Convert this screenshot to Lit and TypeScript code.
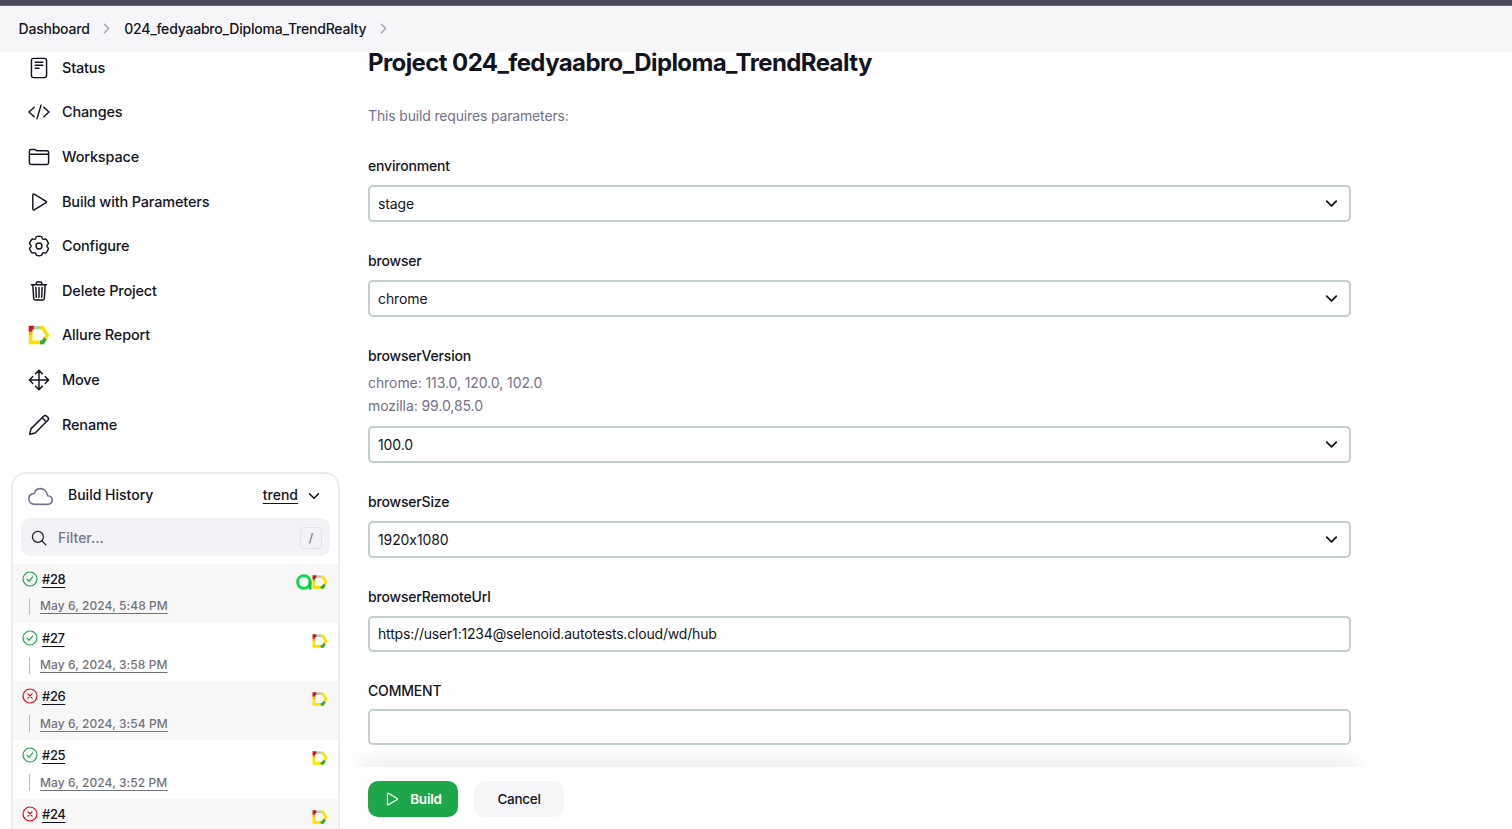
import { LitElement, html, svg, css, nothing, TemplateResult } from "lit";
import { customElement, property } from "lit/decorators.js";

/** Six-lobed gear outline, built from alternating lobe and valley points. */
function gearPath(): string {
  const pts: [number, number][] = [];
  for (let i = 0; i < 6; i++) {
    const base = -90 + i * 60;
    for (const [da, r] of [[-17, 232], [0, 226], [17, 232], [24, 184], [36, 184]] as const) {
      const a = ((base + da) * Math.PI) / 180;
      pts.push([256 + r * Math.cos(a), 256 + r * Math.sin(a)]);
    }
  }
  const mid = (p: [number, number], q: [number, number]) =>
    `${((p[0] + q[0]) / 2).toFixed(1)} ${((p[1] + q[1]) / 2).toFixed(1)}`;
  let d = `M${mid(pts[pts.length - 1], pts[0])}`;
  pts.forEach((p, i) => {
    d += `Q${p[0].toFixed(1)} ${p[1].toFixed(1)} ${mid(p, pts[(i + 1) % pts.length])}`;
  });
  return d + "Z";
}

const allure = svg`
  <path d="M0 8H3.600V14.400H11.500V18H0z" fill="#ffe000"/>
  <path d="M0 5H3.600V9H0z" fill="#fbb614"/>
  <path d="M11 .200h3.600L20 9l-2.600 4.600-3-1.700L16 9l-3.400-5.500H11z" fill="#ffe000"/>
  <path d="M4.500 .200H11.400V3.500H4.500z" fill="#a5d6a4"/>
  <path d="M17.600 13.200L14.800 18H11v-3.600h1.800l1.800-3z" fill="#2fa349"/>
  <path d="M0 0H5V3.600H3.600V5.600H0z" fill="#dc0f1e"/>`;

const shapes: Record<string, TemplateResult> = {
  status: svg`<rect x="80" y="32" width="352" height="448" rx="48"/><path d="M168 120h176M168 192h176M168 264h88"/>`,
  code: svg`<path d="M144 368L24 256l120-112M368 368l120-112-120-112M304 96l-96 320"/>`,
  folder: svg`<path d="M440 432H72a40 40 0 01-40-40V120a40 40 0 0140-40h75.89a40 40 0 0122.19 6.72l27.84 18.56a40 40 0 0022.19 6.72H440a40 40 0 0140 40v240a40 40 0 01-40 40zM32 192h448"/>`,
  play: svg`<path d="M112 91v330c0 17.44 17 28.52 31 20.16l277.900-168.370c12.120-7.250 12.120-26.330 0-33.580L143 70.840c-14-8.360-31 2.720-31 20.160z"/>`,
  gear: svg`<path d=${gearPath()}/><circle cx="256" cy="256" r="68"/>`,
  trash: svg`<path d="M112 112l20 320c.95 18.49 14.4 32 32 32h184c17.67 0 30.87-13.51 32-32l20-320M80 112h352M192 112V72a23.93 23.93 0 0124-24h80a23.93 23.93 0 0124 24v40M256 176v224M184 176l8 224M328 176l-8 224"/>`,
  move: svg`<path d="M176 112l80-80 80 80M256 32v448M176 400l80 80 80-80M400 176l80 80-80 80M112 176l-80 80 80 80M32 256h448"/>`,
  pencil: svg`<path d="M40 472l28-126L364 50a50 50 0 0170 0l28 28a50 50 0 010 70L166 444zM330 88l94 94"/>`,
  cloud: svg`<path d="M400 240c-8.890-89.540-71-144-144-144-69 0-113.440 48.200-128 96-60 6-112 43.590-112 112 0 66 54 112 120 112h260c55 0 100-27.440 100-88 0-59.820-53-85.760-96-88z"/>`,
  search: svg`<circle cx="221" cy="221" r="175"/><path d="M348 348l126 126"/>`,
  down: svg`<path d="M112 184l144 144 144-144"/>`,
  right: svg`<path d="M184 112l144 144-144 144"/>`,
  ok: svg`<circle cx="256" cy="256" r="224"/><path d="M342 190L226 328l-56-62"/>`,
  fail: svg`<circle cx="256" cy="256" r="224"/><path d="M322 322L190 190M322 190L190 322"/>`,
};

@customElement("ui-icon")
export class UiIcon extends LitElement {
  @property() name = "";
  static styles = css`
    :host { display: block; flex: none; width: 22px; height: 22px; }
    svg { display: block; width: 100%; height: 100%; overflow: visible; }
    .line { fill: none; stroke: currentColor; stroke-width: var(--w, 32); stroke-linecap: round; stroke-linejoin: round; }
  `;
  render() {
    if (this.name === "allure") return html`<svg viewBox="-0.700 -1.700 21.400 21.400">${allure}</svg>`;
    if (this.name === "testops")
      return html`<svg viewBox="0 0 16 16">
        <circle cx="7.800" cy="8" r="6.300" fill="none" stroke="#05de4b" stroke-width="2.800"/>
        <path d="M14.200 7v8.600" stroke="#00c244" stroke-width="2.600"/>
      </svg>`;
    return html`<svg viewBox="0 0 512 512"><g class="line">${shapes[this.name] ?? nothing}</g></svg>`;
  }
}

const tasks = [
  ["status", "Status"],
  ["code", "Changes"],
  ["folder", "Workspace"],
  ["play", "Build with Parameters"],
  ["gear", "Configure"],
  ["trash", "Delete Project"],
  ["allure", "Allure Report"],
  ["move", "Move"],
  ["pencil", "Rename"],
];

const builds = [
  { id: "#28", ok: true, time: "May 6, 2024, 5:48 PM", testops: true },
  { id: "#27", ok: true, time: "May 6, 2024, 3:58 PM" },
  { id: "#26", ok: false, time: "May 6, 2024, 3:54 PM" },
  { id: "#25", ok: true, time: "May 6, 2024, 3:52 PM" },
  { id: "#24", ok: false },
];

const params = [
  { name: "environment", value: "stage", select: true },
  { name: "browser", value: "chrome", select: true },
  { name: "browserVersion", value: "100.0", select: true, notes: ["chrome: 113.0, 120.0, 102.0", "mozilla: 99.0,85.0"] },
  { name: "browserSize", value: "1920x1080", select: true },
  { name: "browserRemoteUrl", value: "https://user1:1234@selenoid.autotests.cloud/wd/hub" },
  { name: "COMMENT", value: "" },
];

@customElement("app-root")
export class AppRoot extends LitElement {
  static styles = css`
    :host {
      display: flex; flex-direction: column; height: 829px; overflow: hidden; background: #fff;
      color: #14141f; font: 500 14px/22px Inter, "Liberation Sans", sans-serif;
      font-feature-settings: "calt" 0; letter-spacing: -0.180px;
    }
    * { box-sizing: border-box; }
    .top { flex: none; height: 6px; background: #4d4a5c; border-bottom: 1px solid #6b687a; }
    .crumbs { flex: none; display: flex; align-items: center; height: 45.500px; padding-left: 18.500px; background: #f6f6f9; letter-spacing: -0.210px; }
    .crumbs ui-icon { width: 15px; height: 15px; margin: 0 10px 0 9.500px; color: #a5a3b5; --w: 52; }
    .body { flex: 1; min-height: 0; display: grid; grid-template-columns: 340px 1fr; column-gap: 28px; }
    .side { min-width: 0; padding-left: 10.500px; overflow: hidden; }
    .tasks { display: flex; flex-direction: column; margin-top: -6px; padding-left: 17.500px; font-size: 14.500px; letter-spacing: -0.170px; }
    .task { display: flex; align-items: center; gap: 12px; height: 44.600px; }
    .task ui-icon { --w: 34; }
    .history { margin-top: 25px; border: 2px solid #ebebf3; border-radius: 15px; height: 500px; overflow: hidden; }
    .hist-head { display: flex; align-items: center; height: 43px; padding: 0 16px 0 15px; letter-spacing: 0; }
    .hist-head .cloud { width: 25px; height: 25px; margin-top: 2px; color: #76748e; --w: 34; }
    .hist-title { flex: 1; padding-left: 15.500px; }
    .trend { text-decoration: underline; text-underline-offset: 3px; text-decoration-thickness: 1px; }
    .hist-head .chev { width: 16px; height: 16px; margin: 2px 0 0 8px; --w: 48; }
    .filter { display: flex; align-items: center; height: 38px; margin: 1.500px 8px 7.500px; padding: 1px 8px 0 10.500px; border-radius: 9px; background: #f2f2f7; color: #77758f; }
    .filter ui-icon { width: 16px; height: 16px; color: #24242e; --w: 40; }
    .filter-text { flex: 1; padding-left: 11px; letter-spacing: 0; }
    .key { width: 22px; height: 22px; border: 1.500px solid #e2e2ec; border-radius: 4px; text-align: center; font-size: 12px; line-height: 20px; }
    .build { display: grid; grid-template-columns: 1fr auto; align-content: start; height: 58.800px; padding: 4px 10px 0 9.500px; }
    .build:nth-child(odd) { background: #f7f7f8; }
    .build-id { display: flex; align-items: center; height: 22px; gap: 4px; font-size: 13px; letter-spacing: -0.400px; }
    .build-id ui-icon { width: 16px; height: 16px; --w: 38; }
    .ok { color: #1ea64b; }
    .fail { color: #e6001f; }
    .num { text-decoration: underline; text-underline-offset: 3px; text-decoration-thickness: 1px; }
    .badges { display: flex; height: 22px; padding-top: 6px; }
    .badges ui-icon { width: 16px; height: 16px; }
    .when { display: flex; align-items: center; grid-column: 1 / 3; height: 17px; margin: 8px 0 0 7px; padding-left: 10px; border-left: 1.500px solid #b6bec7; color: #73737c; font-size: 12px; letter-spacing: 0.070px; text-decoration: underline; text-underline-offset: 3px; }
    .main { display: flex; flex-direction: column; min-width: 0; }
    .form { flex: 1; min-height: 0; width: 983px; }
    h1 { margin: 0; font-size: 24px; line-height: 22px; font-weight: 700; letter-spacing: -0.600px; }
    .intro { margin-top: 31.500px; color: #73718b; font-weight: 400; letter-spacing: -0.160px; }
    .field { margin-top: 28px; }
    .label { height: 29.500px; }
    .label.select { height: 30px; }
    .notes { margin-top: -4px; padding-bottom: 9px; color: #73718b; font-weight: 400; line-height: 23px; letter-spacing: -0.080px; }
    .box { display: flex; align-items: center; justify-content: space-between; height: 36px; padding: 0 9px 0 8px; border: 2px solid #c3ced1; border-radius: 5px; font-weight: 400; }
    .box.select { height: 37px; letter-spacing: -0.100px; }
    .box ui-icon { width: 17px; height: 17px; --w: 54; }
    .actions {
      flex: none; position: relative; display: flex; gap: 16px; height: 62px; padding-top: 14px; width: 983px; background: #fff;
      box-shadow: 0 0 20px 8px rgba(0, 0, 0, .07);
      clip-path: polygon(-30px -30px, calc(100% + 30px) -30px, calc(100% + 30px) 0, 100% 0, 100% 100%, 0 100%, 0 0, -30px 0);
    }
    .btn { display: flex; align-items: center; justify-content: center; width: 90px; height: 36px; border-radius: 10px; background: #f6f6f9; font-size: 13.500px; letter-spacing: -0.280px; }
    .primary { gap: 10px; background: #1ea64b; color: #fff; font-weight: 600; letter-spacing: -0.200px; }
    .btn ui-icon { width: 16px; height: 16px; --w: 38; }
  `;

  render() {
    return html`
      <div class="top"></div>
      <nav class="crumbs">
        <span>Dashboard</span><ui-icon name="right"></ui-icon>
        <span>024_fedyaabro_Diploma_TrendRealty</span><ui-icon name="right"></ui-icon>
      </nav>
      <div class="body">
        <aside class="side">
          <div class="tasks">
            ${tasks.map(([icon, text]) => html`<div class="task"><ui-icon name=${icon}></ui-icon><span>${text}</span></div>`)}
          </div>
          <section class="history">
            <div class="hist-head">
              <ui-icon class="cloud" name="cloud"></ui-icon>
              <span class="hist-title">Build History</span><span class="trend">trend</span>
              <ui-icon class="chev" name="down"></ui-icon>
            </div>
            <div class="filter"><ui-icon name="search"></ui-icon><span class="filter-text">Filter...</span><span class="key">/</span></div>
            <div class="builds">
              ${builds.map((b) => html`
                <div class="build">
                  <div class="build-id"><ui-icon class=${b.ok ? "ok" : "fail"} name=${b.ok ? "ok" : "fail"}></ui-icon><span class="num">${b.id}</span></div>
                  <div class="badges">${b.testops ? html`<ui-icon name="testops"></ui-icon>` : nothing}<ui-icon name="allure"></ui-icon></div>
                  ${b.time ? html`<div class="when"><span>${b.time}</span></div>` : nothing}
                </div>`)}
            </div>
          </section>
        </aside>
        <main class="main">
          <div class="form">
            <h1>Project 024_fedyaabro_Diploma_TrendRealty</h1>
            <div class="intro">This build requires parameters:</div>
            ${params.map((p) => html`
              <div class="field">
                <div class="label ${p.select ? "select" : ""}">${p.name}</div>
                ${p.notes ? html`<div class="notes">${p.notes.map((n) => html`<div>${n}</div>`)}</div>` : nothing}
                <div class="box ${p.select ? "select" : ""}"><span>${p.value}</span>${p.select ? html`<ui-icon name="down"></ui-icon>` : nothing}</div>
              </div>`)}
          </div>
          <div class="actions">
            <div class="btn primary"><ui-icon name="play"></ui-icon><span>Build</span></div>
            <div class="btn">Cancel</div>
          </div>
        </main>
      </div>`;
  }
}
